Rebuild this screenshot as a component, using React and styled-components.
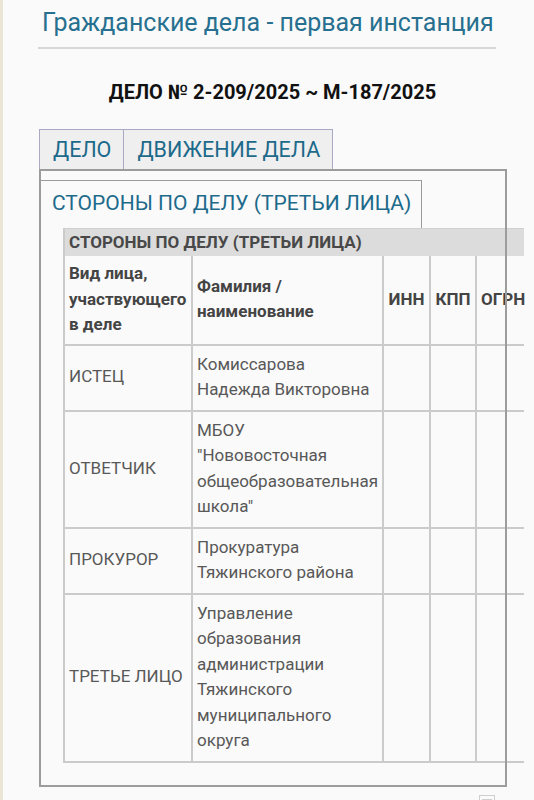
import React from "react";
import styled, { createGlobalStyle } from "styled-components";

const GlobalStyle = createGlobalStyle`
  html, body {
    margin: 0;
    padding: 0;
    background: #fafafa;
  }
  body {
    font-family: Roboto, "Noto Sans", "Liberation Sans", sans-serif;
    border-left: 3px solid #ebe5d6;
    overflow-x: hidden;
    min-height: 800px;
    box-sizing: border-box;
  }
`;

const Page = styled.div`
  padding: 0 27px 0 35px;
`;

const Title = styled.h1`
  margin: 0;
  padding: 8px 0 0 4px;
  font-size: 25px;
  line-height: 30px;
  font-weight: 400;
  color: #27708f;
  white-space: nowrap;
`;

const Rule = styled.hr`
  margin: 9px 11px 0 0;
  border: none;
  border-top: 2px solid #d6d8da;
`;

const CaseNumber = styled.h2`
  margin: 32px 0 25px;
  text-align: center;
  font-size: 20px;
  line-height: 23px;
  font-weight: 700;
  color: #111;
`;

const TabList = styled.div`
  display: flex;
  padding-left: ${(p) => (p.$inner ? "0" : "1px")};
  padding-top: ${(p) => (p.$inner ? "9px" : "0")};
`;

const Tab = styled.div`
  height: ${(p) => (p.$active ? "48px" : "40px")};
  box-sizing: border-box;
  display: flex;
  align-items: center;
  padding: ${(p) => (p.$active ? "0 10px 4px 12px" : "0 12px 0 13px")};
  font-size: ${(p) => (p.$active ? "21px" : "21.5px")};
  color: #1d6a8b;
  white-space: nowrap;
  background: ${(p) => (p.$active ? "#fafafa" : "#efefef")};
  border: 1px solid ${(p) => (p.$active ? "#9a9a9a" : "#a9a9c4")};
  border-bottom: none;
  & + & {
    border-left: none;
  }
`;

const Panel = styled.div`
  position: relative;
  margin-left: 1px;
  background: #fafafa;
  padding: 2px 0 24px;

  &::after {
    content: "";
    position: absolute;
    inset: 0;
    border: 2px solid #9c9c9c;
    pointer-events: none;
    z-index: 2;
  }
`;

const TabContent = styled.div`
  padding-left: 24px;
`;

const Table = styled.table`
  width: 460px;
  border-collapse: collapse;
  table-layout: fixed;
  background: #fafafa;
  font-size: 17px;
  line-height: 25.5px;
`;

const Caption = styled.th`
  height: 27px;
  padding: 0 4px;
  text-align: left;
  font-weight: 700;
  color: #484848;
  background: #dcdcdc;
  border-top: 1px solid #cfcfcf;
  border-left: 2px solid #cbcbcb;
  white-space: nowrap;
`;

const HeadCell = styled.th`
  padding: 5px 4px 6px;
  text-align: ${(p) => (p.$center ? "center" : "left")};
  vertical-align: middle;
  font-weight: 700;
  color: #444;
  border-left: 2px solid #cbcbcb;
  border-bottom: 2px solid #cbcbcb;
  white-space: ${(p) => (p.$center ? "nowrap" : "normal")};
`;

const Cell = styled.td`
  padding: 6px 4px 7px 4px;
  vertical-align: middle;
  color: #585858;
  border-left: 2px solid #cbcbcb;
  border-bottom: 2px solid #cbcbcb;
`;

const Footer = styled.div`
  display: flex;
  justify-content: flex-end;
  padding: 8px 12px 0 0;
`;

const rows = [
  { kind: "ИСТЕЦ", name: ["Комиссарова", "Надежда Викторовна"] },
  {
    kind: "ОТВЕТЧИК",
    name: ["МБОУ", '"Нововосточная', "общеобразовательная", 'школа"'],
  },
  { kind: "ПРОКУРОР", name: ["Прокуратура", "Тяжинского района"] },
  {
    kind: "ТРЕТЬЕ ЛИЦО",
    name: [
      "Управление",
      "образования",
      "администрации",
      "Тяжинского",
      "муниципального",
      "округа",
    ],
  },
];

function ListIcon() {
  return (
    <svg width="16" height="10" viewBox="0 0 16 10">
      <rect x="0.5" y="0.5" width="15" height="12" fill="none" stroke="#cfcfcf" />
      <line x1="3" y1="4.5" x2="13" y2="4.5" stroke="#cfcfcf" />
    </svg>
  );
}

export default function App() {
  return (
    <>
      <GlobalStyle />
      <Page>
        <Title>Гражданские дела - первая инстанция</Title>
        <Rule />
        <CaseNumber>ДЕЛО № 2-209/2025 ~ М-187/2025</CaseNumber>

        <TabList>
          <Tab>ДЕЛО</Tab>
          <Tab>ДВИЖЕНИЕ ДЕЛА</Tab>
        </TabList>

        <Panel>
          <TabList $inner>
            <Tab $active>СТОРОНЫ ПО ДЕЛУ (ТРЕТЬИ ЛИЦА)</Tab>
          </TabList>
          <TabContent>
            <Table>
              <colgroup>
                <col style={{ width: 128 }} />
                <col style={{ width: 191 }} />
                <col style={{ width: 47 }} />
                <col style={{ width: 46 }} />
                <col style={{ width: 48 }} />
              </colgroup>
              <thead>
                <tr>
                  <Caption colSpan={5}>СТОРОНЫ ПО ДЕЛУ (ТРЕТЬИ ЛИЦА)</Caption>
                </tr>
                <tr>
                  <HeadCell>Вид лица, участвующего в деле</HeadCell>
                  <HeadCell>Фамилия / наименование</HeadCell>
                  <HeadCell $center>ИНН</HeadCell>
                  <HeadCell $center>КПП</HeadCell>
                  <HeadCell $center>ОГРН</HeadCell>
                </tr>
              </thead>
              <tbody>
                {rows.map((r) => (
                  <tr key={r.kind}>
                    <Cell>{r.kind}</Cell>
                    <Cell>
                      {r.name.map((line, i) => (
                        <React.Fragment key={i}>
                          {i > 0 && <br />}
                          {line}
                        </React.Fragment>
                      ))}
                    </Cell>
                    <Cell />
                    <Cell />
                    <Cell />
                  </tr>
                ))}
              </tbody>
            </Table>
          </TabContent>
        </Panel>
        <Footer>
          <ListIcon />
        </Footer>
      </Page>
    </>
  );
}
